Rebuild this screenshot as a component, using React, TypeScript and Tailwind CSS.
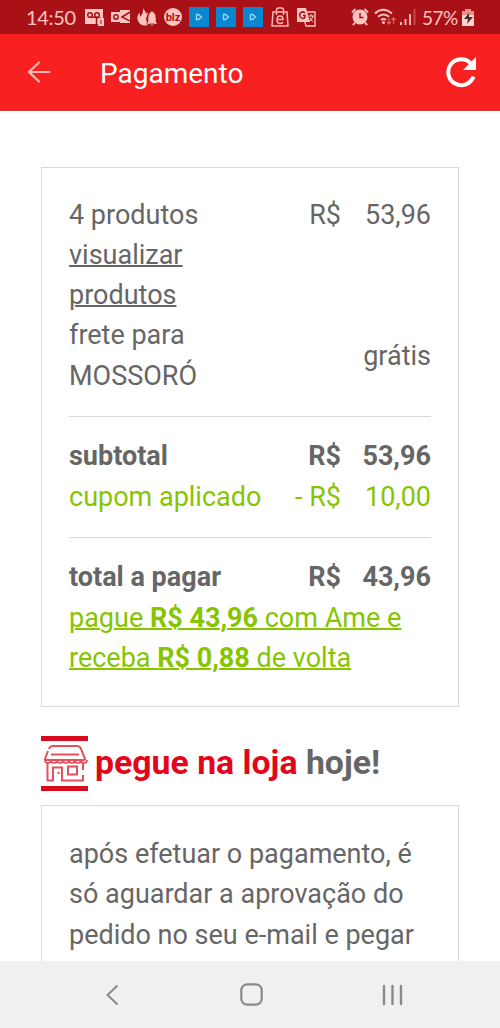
import type { ReactNode } from 'react'

export default function App() {
  return (
    <div className="flex h-[1028px] w-[500px] flex-col overflow-hidden bg-white font-['Roboto',sans-serif] text-[#666]">
      <StatusBar />
      <Header />
      <main className="min-h-0 flex-1 overflow-hidden px-[41px] pt-[56px] text-[27px] leading-[40.3px]">
        <OrderSummary />
        <div className="mt-[29px] flex h-[55px] items-center gap-[7px]">
          <StoreIcon />
          <h2 className="text-[33.8px] font-bold whitespace-nowrap"><span className="text-[#e3061a]">pegue na loja</span> hoje!</h2>
        </div>
        <div className="mt-[14px] border border-[#d9d9d9] px-[27px] py-[28px] whitespace-nowrap">
          após efetuar o pagamento, é<br />
          só aguardar a aprovação do<br />
          pedido no seu e-mail e pegar
        </div>
      </main>
      <NavBar />
    </div>
  )
}

function Header() {
  return (
    <header className="flex h-[77px] shrink-0 items-center border-b border-[#c93a35] bg-[#f82020] pr-[23px] pl-[27px] text-white">
      <svg width="24" height="24" viewBox="0 0 24 24" fill="none" stroke="#ffb9b4" strokeWidth="2.2" strokeLinecap="round">
        <path d="M22.500 12H2M12 2.500L2 12l10 9.500" />
      </svg>
      <h1 className="ml-[49px] flex-1 pt-[3px] text-[28px] leading-[40px]">Pagamento</h1>
      <svg width="32" height="32" viewBox="0 0 32 32" fill="none" stroke="#fff" strokeWidth="4">
        <path d="M28.500 20.500A13 13 0 1 1 25.500 7" />
        <path d="M31 1v13H18z" fill="#fff" stroke="none" />
      </svg>
    </header>
  )
}

function OrderSummary() {
  return (
    <section className="h-[540px] border border-[#d9d9d9] px-[27px] pt-[26.6px]">
      <Row label="4 produtos"><Price value="53,96" /></Row>
      <a className="block w-[130px] underline decoration-[2px]">visualizar produtos</a>
      <Row label={<>frete para<br />MOSSORÓ</>}>grátis</Row>
      <hr className="mt-[20px] mb-[19.3px] border-[#d9d9d9]" />
      <Row label="subtotal" className="font-bold"><Price value="53,96" /></Row>
      <Row label="cupom aplicado" className="text-[#86c500]"><Price sign="- " value="10,00" /></Row>
      <hr className="mt-[20px] mb-[19.3px] border-[#d9d9d9]" />
      <Row label="total a pagar" className="font-bold"><Price value="43,96" /></Row>
      <a className="block whitespace-nowrap text-[#86c500] underline decoration-[2px]">
        pague <b className="font-bold">R$ 43,96</b> com Ame e<br />
        receba <b className="font-bold">R$ 0,88</b> de volta
      </a>
    </section>
  )
}

function Row({ label, className = '', children }: { label: ReactNode; className?: string; children: ReactNode }) {
  return (
    <div className={`flex items-center justify-between whitespace-nowrap ${className}`}>
      <span>{label}</span>
      <span>{children}</span>
    </div>
  )
}

function Price({ sign = '', value }: { sign?: string; value: string }) {
  return (
    <span className="flex text-right">
      <span>{sign}R$</span>
      <span className="w-[90px]">{value}</span>
    </span>
  )
}

function StoreIcon() {
  return (
    <svg className="shrink-0" width="47" height="55" viewBox="0 0 47 55" fill="none" stroke="#e4505c" strokeWidth="2">
      <path d="M0 2.500h47M0 52.500h47" stroke="#d80a1d" strokeWidth="5" />
      <path d="M8 13q1-3 4-3h24q3 0 4 3l4.500 11M7 15L3.500 24M10 18.500h28M3.500 24h40" />
      <path d="M4 24q0 3 3 3t3-3q0 3 3 3t3-3q0 3 3 3t3-3q0 3 3 3t3-3q0 3 3 3t3-3q0 3 3 3t3-3q0 3 3 3t3-3" strokeWidth="1.700" />
      <path d="M6.500 27v17.500h5.500V31.500h9v13h21V39M42 26v8M27 30.500h9v8h-9z" />
      <circle cx="17.500" cy="37" r="1.200" fill="#e4505c" stroke="none" />
    </svg>
  )
}

function StatusBar() {
  return (
    <div className="flex h-[34px] shrink-0 items-center bg-[#a91116] pl-[26px] font-['Lato',sans-serif] text-[20px] text-[#ffc4c0]">
      <span className="w-[58px] leading-none tracking-[-0.3px]">14:50</span>
      <div className="flex w-[267px] items-center gap-[7px]">
        <svg width="20" height="20" viewBox="0 0 20 20" fill="#ffc4c0">
          <path d="M1 2h18v15H1z" />
          <g fill="none" stroke="#a91116" strokeWidth="1.500">
            <circle cx="6" cy="8" r="2.300" />
            <circle cx="13" cy="8" r="2.300" />
            <path d="M6 10.300h7M12.500 18v-7H17" />
          </g>
          <path d="M14 11h6v8h-6z" />
          <path d="M17 13v4" stroke="#a91116" />
        </svg>
        <svg width="19" height="18" viewBox="0 0 19 18" fill="#ffc4c0">
          <path d="M0 4h9V2h10v13H9v-1H0z" />
          <g fill="none" stroke="#a91116" strokeWidth="1.500">
            <circle cx="5" cy="9" r="2.200" />
            <path d="M19 4l-8 5 8 4" />
          </g>
        </svg>
        <svg width="20" height="20" viewBox="0 0 20 20" fill="#ffc4c0">
          <path d="M6 1q3 4 3 6l2-2q-1 5-2 6 0 3 2 7Q4 20 1 14q-2-6 2-8v4q4-4 3-9z" />
          <path d="M15 4q4 2 4 7v4l2 2H9l2-2v-4q0-5 4-7zM13 17h4q-2 3-4 0z" stroke="#a91116" strokeWidth=".5" />
        </svg>
        <svg width="18" height="18" viewBox="0 0 18 18">
          <circle cx="9" cy="9" r="9" fill="#ffc4c0" />
          <text x="9" y="12.500" textAnchor="middle" fontSize="11" fontWeight="bold" fontFamily="Roboto" fill="#a91116">blz</text>
        </svg>
        <PlayTile />
        <PlayTile />
        <PlayTile />
        <svg className="ml-px" width="18" height="20" viewBox="0 0 18 20" fill="none" stroke="#ffb5b1" strokeWidth="1.500">
          <path d="M2 5h14l1 14H1zM5.500 8V3q0-2 2-2h3q2 0 2 2v5" />
          <path d="M6 12.500h6q0-3.500-3-3.500t-3 3.500q0 4 3 4 2 0 3-1.500" />
        </svg>
        <svg width="20" height="20" viewBox="0 0 20 20" fill="none">
          <path d="M6 5h13v14h-9z" stroke="#ffc4c0" strokeWidth="1.300" />
          <path d="M1 1h9l4 14H1z" fill="#ffc4c0" />
          <path d="M9 6Q7 4 5 5.500T4 9.500q1 2 3 2T9 8.500H7" stroke="#a91116" strokeWidth="1.500" />
          <path d="M12.500 9H18M15 7v2m-2 6q3-2 4-6m-3 2q1 2 3 4" stroke="#ffc4c0" />
        </svg>
      </div>
      <svg width="18" height="18" viewBox="0 0 18 18" fill="none" stroke="#ffc4c0" strokeWidth="2">
        <path d="M1 4.500L4.500 1M17 4.500L13.500 1M4 14.500l-2 2.500M14 14.500l2 2.500" />
        <circle cx="9" cy="9" r="6.500" fill="#ffc4c0" />
        <path d="M9 5v4.500h3.500" stroke="#a91116" strokeWidth="1.500" />
      </svg>
      <svg className="ml-[5px]" width="23" height="20" viewBox="0 0 23 20" fill="none" stroke="#ffc4c0" strokeWidth="2">
        <path d="M1 6.500q8-7.500 17 0M4 9.800q5.500-4.600 11 0M7 13q2.500-2 5 0" />
        <circle cx="9.500" cy="15.500" r="1.500" fill="#ffc4c0" stroke="none" />
        <path d="M15 11v6m-2-2l2 2 2-2M19.500 17v-6m-2 2l2-2 2 2" stroke="#dc625f" strokeWidth="1.300" />
      </svg>
      <svg className="ml-[3px]" width="16" height="18" viewBox="0 0 16 18" strokeWidth="1.800">
        <path d="M1 14v3M5.500 11v6M10 6v11" stroke="#ffc4c0" />
        <path d="M14.500 1v16" stroke="#c9504e" />
      </svg>
      <span className="ml-[6px] w-[40px] text-[19px] leading-none tracking-[-0.5px]">57%</span>
      <svg width="12" height="18" viewBox="0 0 12 18">
        <path d="M3 1h6v2h3v15H0V3h3z" fill="#e98f8c" />
        <path d="M0 7h12v11H0z" fill="#ffd4d0" />
        <path d="M7 5l-5 6h4l-1 5 6-7H7z" fill="#43292b" />
      </svg>
    </div>
  )
}

function PlayTile() {
  return (
    <svg width="20" height="20" viewBox="0 0 20 20">
      <path d="M0 0h20v20H0z" fill="#0b87d2" />
      <path d="M7.500 7.500v5h2l3-2.500-3-2.500z" fill="none" stroke="#9bd9f5" strokeWidth="1.300" />
    </svg>
  )
}

function NavBar() {
  return (
    <nav className="flex h-[67px] shrink-0 items-center justify-between bg-[#f0f0f0] pr-[97px] pl-[105px]">
      <svg width="14" height="22" viewBox="0 0 14 22" fill="none" stroke="#8a8a8a" strokeWidth="2">
        <path d="M12.500 1.500L2.500 11l10 9.500" />
      </svg>
      <svg className="ml-[2px]" width="23" height="23" viewBox="0 0 23 23" fill="none" stroke="#8a8a8a" strokeWidth="2.200">
        <rect x="1.300" y="1.300" width="20.400" height="20.400" rx="6" />
      </svg>
      <svg width="21" height="22" viewBox="0 0 21 22" stroke="#8a8a8a" strokeWidth="2.400" strokeLinecap="round">
        <path d="M2 2v18M10.500 2v18M19 2v18" />
      </svg>
    </nav>
  )
}
